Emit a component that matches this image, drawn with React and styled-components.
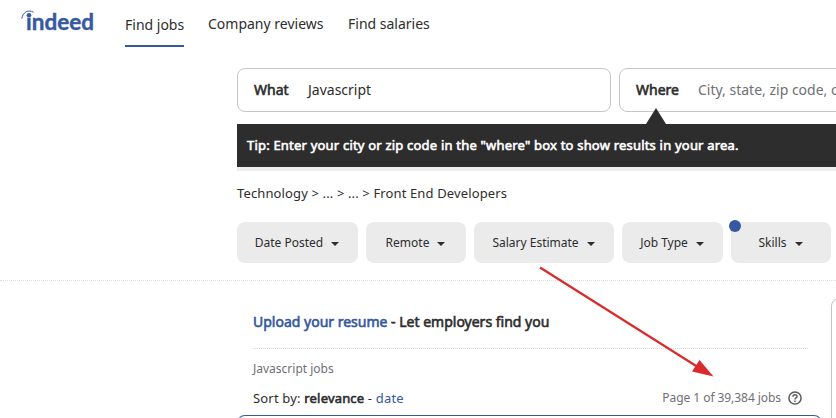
import React from "react";
import styled, { createGlobalStyle } from "styled-components";

const Global = createGlobalStyle`
  * { box-sizing: border-box; }
  html, body { margin: 0; background: #fff; overflow: hidden; }
  body { font-family: "Noto Sans", "Open Sans", sans-serif; color: #2d2d2d; font-size: 14px; }
`;

const Page = styled.div`
  position: relative;
  width: 836px;
  height: 418px;
  overflow: hidden;
  display: flex;
  flex-direction: column;
`;

const Header = styled.header`
  display: flex;
  height: 68px;
  padding-left: 20px;
`;

const Logo = styled.svg`
  width: 76px;
  height: 34px;
  margin: 5px 29px 0 0;
  flex: none;
`;

const Nav = styled.nav`
  display: flex;
  align-items: flex-start;
  gap: 24px;
`;

const NavItem = styled.a`
  height: 47px;
  width: ${(p) => p.$w}px;
  padding-top: ${(p) => (p.$active ? 15 : 14)}px;
  line-height: 20px;
  white-space: nowrap;
  border-bottom: 2px solid ${(p) => (p.$active ? "#3558a0" : "transparent")};
`;

const SearchRow = styled.form`
  display: flex;
  gap: 8px;
  height: 44px;
  margin-left: 237px;
`;

const Field = styled.label`
  flex: none;
  display: flex;
  align-items: center;
  width: 374px;
  height: 44px;
  padding: 0 0 1px 16px;
  border: 1px solid #c6c6c6;
  border-radius: 8px;
  white-space: nowrap;
`;

const Strong = styled.b`
  font-weight: 400;
  -webkit-text-stroke: 0.6px currentColor;
`;

const FieldName = styled(Strong)`
  width: ${(p) => p.$w}px;
`;

const FieldValue = styled.span`
  color: ${(p) => (p.$muted ? "#6f6f76" : "#2d2d2d")};
`;

const Tip = styled.div`
  position: relative;
  height: 43px;
  margin: 12px 0 0 237px;
  padding-left: 10px;
  background: #2d2d2d;
  box-shadow: 0 4px 0 #eeeeee;
  color: #fff;
  font-size: 13px;
  letter-spacing: 0.2px;
  line-height: 42px;
  white-space: nowrap;

  &::before {
    content: "";
    position: absolute;
    left: 409px;
    top: -16px;
    border: solid transparent;
    border-width: 0 10px 16px;
    border-bottom-color: #2d2d2d;
  }
`;

const Crumbs = styled.div`
  margin: 16px 0 0 237px;
  height: 20px;
  line-height: 20px;
  font-size: 13px;
  letter-spacing: 0.13px;
`;

const Filters = styled.div`
  display: flex;
  gap: 8px;
  margin: 19px 0 0 237px;
`;

const Filter = styled.button`
  position: relative;
  flex: none;
  display: flex;
  align-items: center;
  justify-content: center;
  gap: 8px;
  width: ${(p) => p.$w}px;
  height: 41px;
  padding: 0 1px 0 0;
  border: 0;
  border-radius: 8px;
  background: #ebebeb;
  color: #2d2d2d;
  font: 12px "Noto Sans", sans-serif;
`;

const Caret = styled.i`
  margin-top: 3px;
  border: solid transparent;
  border-width: 4px 4px 0;
  border-top-color: #2d2d2d;
`;

const NewDot = styled.i`
  position: absolute;
  left: -2px;
  top: -2px;
  width: 12px;
  height: 12px;
  border-radius: 50%;
  background: #3558a0;
`;

const Results = styled.main`
  display: flex;
  gap: 9px;
  height: 138px;
  margin-top: 17px;
  border-top: 1px dotted #dedede;
`;

const ListColumn = styled.section`
  width: 585px;
  margin-left: 237px;
  flex: none;
`;

const Resume = styled.div`
  height: 68px;
  margin: 0 14px 0 16px;
  padding-top: 31px;
  border-bottom: 1px dotted #d8d8d8;
  line-height: 20px;
`;

const Link = styled.a`
  color: #3558a0;
`;

const Query = styled.div`
  height: 16px;
  margin: 12px 16px 0;
  color: #6f6f76;
  font-size: 12px;
  line-height: 16px;
`;

const SortRow = styled.div`
  display: flex;
  align-items: center;
  justify-content: space-between;
  height: 20px;
  margin: 11px 20px 0 16px;
  font-size: 13px;
  letter-spacing: 0.18px;
  line-height: 20px;
`;

const Count = styled.span`
  display: flex;
  align-items: center;
  gap: 7px;
  color: #6f6f76;
  font-size: 12px;
  letter-spacing: -0.06px;
`;

const JobCard = styled.article`
  height: 40px;
  margin-top: 7px;
  border: 1px solid #767676;
  border-top-color: #3558a0;
  border-radius: 8px;
`;

const Detail = styled.aside`
  flex: none;
  width: 300px;
  height: 200px;
  margin-top: 17px;
  border: 1px solid #c6c6c6;
  border-radius: 8px;
`;

const Arrow = styled.svg`
  position: absolute;
  left: 530px;
  top: 260px;
  width: 190px;
  height: 125px;
`;

const FILTERS = [
  ["Date Posted", 121],
  ["Remote", 100],
  ["Salary Estimate", 140],
  ["Job Type", 101],
  ["Skills", 100, true],
];

export default function App() {
  return (
    <Page>
      <Global />
      <Header>
        <Logo viewBox="0 0 76 34" fill="#3558a0">
          <path d="M1.800 13.500C3 7 8 4.300 13.500 7.200" fill="none" stroke="#3558a0" strokeWidth="1" />
          <circle cx="9" cy="10.200" r="2.300" />
          <text x="6" y="24.500" fontFamily="Lato" fontWeight="700" fontSize="22" stroke="#3558a0" strokeWidth="0.4" textLength="68" lengthAdjust="spacingAndGlyphs">ındeed</text>
        </Logo>
        <Nav>
          <NavItem $active $w={59}>Find jobs</NavItem>
          <NavItem $w={116}>Company reviews</NavItem>
          <NavItem $w={82}>Find salaries</NavItem>
        </Nav>
      </Header>
      <SearchRow>
        <Field>
          <FieldName $w={54}>What</FieldName>
          <FieldValue>Javascript</FieldValue>
        </Field>
        <Field>
          <FieldName $w={62}>Where</FieldName>
          <FieldValue $muted>City, state, zip code, or “remote”</FieldValue>
        </Field>
      </SearchRow>
      <Tip>
        <Strong>Tip: Enter your city or zip code in the "where" box to show results in your area.</Strong>
      </Tip>
      <Crumbs>Technology &gt; ... &gt; ... &gt; Front End Developers</Crumbs>
      <Filters>
        {FILTERS.map(([label, w, isNew]) => (
          <Filter key={label} $w={w}>
            {isNew && <NewDot />}
            {label}
            <Caret />
          </Filter>
        ))}
      </Filters>
      <Results>
        <ListColumn>
          <Resume>
            <Strong><Link>Upload your resume</Link> - Let employers find you</Strong>
          </Resume>
          <Query>Javascript jobs</Query>
          <SortRow>
            <span>Sort by: <Strong>relevance</Strong> - <Link>date</Link></span>
            <Count>
              Page 1 of 39,384 jobs
              <svg width="14" height="14" viewBox="0 0 14 14" fill="none" stroke="#5c5c5c" strokeWidth="1.5">
                <circle cx="7" cy="7" r="6.1" />
                <path d="M5 5.7C5 3 9 3 9 5.5C9 7 7 6.9 7 8.6M7 9.5V11" />
              </svg>
            </Count>
          </SortRow>
          <JobCard />
        </ListColumn>
        <Detail />
      </Results>
      <Arrow viewBox="0 0 190 125">
        <path d="M10 7.500L167 106.500" stroke="#d92b2b" strokeWidth="2.200" />
        <path d="M183.500 116.500L162 111.500L169.500 100Z" fill="#d92b2b" />
      </Arrow>
    </Page>
  );
}
